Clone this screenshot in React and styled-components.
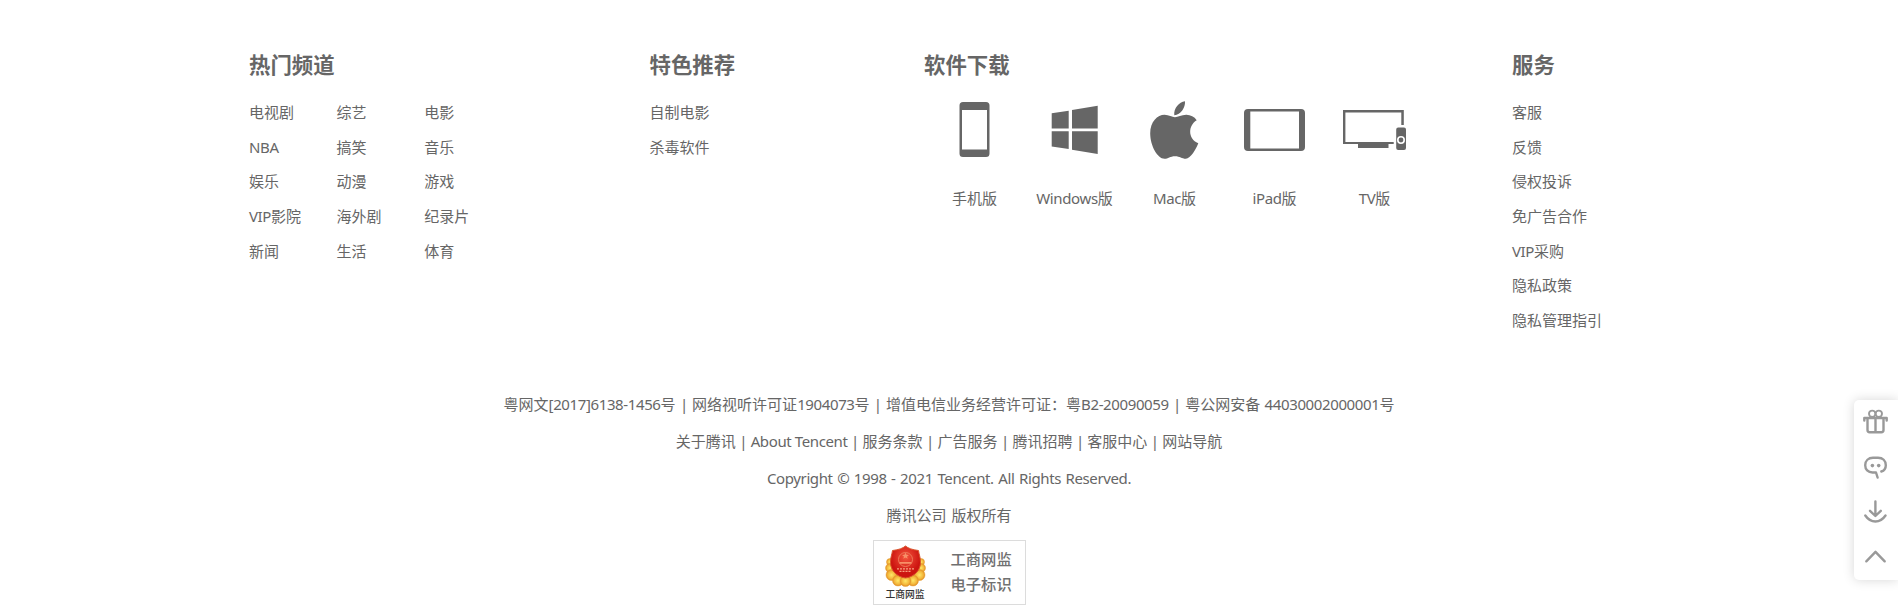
import React from "react";
import styled, { createGlobalStyle } from "styled-components";

const GlobalStyle = createGlobalStyle`
  body { margin: 0; background: #fff; }
  * { box-sizing: border-box; }
`;

const Page = styled.div`
  position: relative;
  height: 616px;
  overflow: hidden;
  color: #666;
  font: 15px/35px "Noto Sans", "Noto Sans CJK SC", sans-serif;
`;

const Columns = styled.nav`
  display: flex;
  height: 386px;
  padding: 47px 0 0 249px;
`;

const Column = styled.section`
  flex: none;
  width: ${(p) => p.$width}px;
`;

const Heading = styled.h3`
  margin: 0 0 13px;
  height: 35px;
  font-size: 21.4px;
  line-height: 35px;
  font-weight: 700;
`;

const LinkGrid = styled.ul`
  display: grid;
  grid-template-columns: repeat(${(p) => p.$cols || 1}, 87.6px);
  grid-auto-rows: 34.7px;
  margin: 0;
  padding: 0;
  list-style: none;
  white-space: nowrap;
`;

const Latin = styled.span`
  letter-spacing: -0.38px;
`;

const Downloads = styled.div`
  display: flex;
`;

const Download = styled.a`
  display: flex;
  flex-direction: column;
  align-items: center;
  width: 100px;
  margin-top: 3px;
  svg { display: block; }
`;

const DownloadName = styled.span`
  margin-top: 19px;
  padding-left: 1px;
  white-space: nowrap;
`;

const Legal = styled.footer`
  display: flex;
  flex-direction: column;
  align-items: center;
`;

const LegalLine = styled.p`
  margin: 0;
  height: 37px;
  line-height: 37px;
  white-space: pre;
  word-spacing: ${(p) => p.$space || 0}px;
`;

const Badge = styled.a`
  display: flex;
  align-items: center;
  width: 153px;
  height: 65px;
  margin-top: 6px;
  border: 1px solid #dcdcdc;
`;

const Seal = styled.span`
  display: flex;
  flex-direction: column;
  align-items: center;
  width: 63px;
  svg { display: block; }
`;

const SealName = styled.span`
  margin-top: 1px;
  color: #333;
  font: 500 9.8px/12px "Noto Sans CJK SC", sans-serif;
`;

const BadgeText = styled.span`
  margin: -3px 0 0 14px;
  color: #707070;
  font: 500 15.3px/25px "Noto Sans CJK SC", sans-serif;
`;

const SideBar = styled.aside`
  position: absolute;
  top: 400px;
  right: 0;
  width: 44px;
  height: 180px;
  border-radius: 5px 0 0 5px;
  background: #fff;
  box-shadow: 0 0 12px rgba(0, 0, 0, 0.16);
  display: flex;
  flex-direction: column;
  svg { display: block; }
`;

const SideButton = styled.a`
  height: 45px;
`;

function LatinText({ children }) {
  return children
    .split(/([\x20-\x7e©]+)/)
    .filter(Boolean)
    .map((part, i) =>
      /^[\x20-\x7e©]/.test(part) ? <Latin key={i}>{part}</Latin> : part
    );
}

function Links({ items, cols }) {
  return (
    <LinkGrid $cols={cols}>
      {items.map((item) => (
        <li key={item}><LatinText>{item}</LatinText></li>
      ))}
    </LinkGrid>
  );
}

const hot = ["电视剧", "综艺", "电影", "NBA", "搞笑", "音乐", "娱乐", "动漫", "游戏", "VIP影院", "海外剧", "纪录片", "新闻", "生活", "体育"];
const featured = ["自制电影", "杀毒软件"];
const service = ["客服", "反馈", "侵权投诉", "免广告合作", "VIP采购", "隐私政策", "隐私管理指引"];

const downloads = [
  {
    name: "手机版",
    art: <path fillRule="evenodd" d="M39 4h23a3.500 3.500 0 0 1 3.500 3.500v48a3.500 3.500 0 0 1-3.500 3.500H39a3.500 3.500 0 0 1-3.500-3.500v-48A3.500 3.500 0 0 1 39 4ZM38 12v39.500h25V12Z" />,
  },
  {
    name: "Windows版",
    art: <path d="M27.700 15.200 44.700 12.800V30.500H27.700ZM48 12.100 73.700 7.800V30.500H48ZM27.700 33.200H44.700V51L27.700 48.600ZM48 33.200H73.700V56L48 51.800Z" />,
  },
  {
    name: "Mac版",
    art: <path d="M72.700 22.200C64 27.500 63.600 40.500 74.300 45.300 71.800 51.500 66.800 60.500 61.800 60.700 57.800 60.700 56 58.200 51 58.200 46 58.200 44.200 60.700 40.500 60.800 33.500 60.600 26.300 48 26.200 35.500 26.200 23.500 33.500 17 40.500 16.800 45 16.800 48 19.200 51 19.200 54 19.200 57.500 16.600 62.500 16.700 66.500 16.800 70.300 18.500 72.700 22.200ZM50.300 17.300C49.500 10.500 55 3.800 61 3.200 61.500 9.500 56.800 16.800 50.300 17.300Z" />,
  },
  {
    name: "iPad版",
    art: <path fillRule="evenodd" d="M24 11h53a4 4 0 0 1 4 4v34a4 4 0 0 1-4 4H24a4 4 0 0 1-4-4V15a4 4 0 0 1 4-4ZM26.300 13.500v37h48.700v-37Z" />,
  },
  {
    name: "TV版",
    art: (
      <>
        <path d="M19 12H79.800V27H77.300V14.400H21.400V44H69.700V46H64.500V50H34V46H19Z" />
        <path fillRule="evenodd" d="M74.200 29.500h5.800a2 2 0 0 1 2 2V50a2 2 0 0 1-2 2h-5.800a2 2 0 0 1-2-2V31.500a2 2 0 0 1 2-2ZM77 38a4 4 0 1 0 0 8a4 4 0 1 0 0-8Zm0 1.600a2.400 2.400 0 1 1 0 4.800a2.400 2.400 0 1 1 0-4.800Z" />
      </>
    ),
  },
];

const sideIcons = [
  <g key="gift">
    <path d="M10.300 20.500V18h22.400v2.500M13.500 19v11q0 2.200 2.200 2.200h11.600q2.200 0 2.200-2.200V19M21.500 18V31" />
    <circle cx="18.200" cy="13.800" r="3.200" strokeWidth="1.900" />
    <circle cx="24.800" cy="13.800" r="3.200" strokeWidth="1.900" />
  </g>,
  <g key="chat">
    <path d="M23.600 32.500L22 27.500H18.500C14 27.500 11.200 24.300 11.200 20.300 11.200 15.600 14.500 12.800 19 12.800H24C28.800 12.800 31.800 15.700 31.800 20.200 31.800 23.300 30.300 25.600 27.300 26.500" />
    <circle cx="18.400" cy="20.600" r="1.800" fill="#999" stroke="none" />
    <circle cx="24.700" cy="20.600" r="1.800" fill="#999" stroke="none" />
  </g>,
  <path key="download" d="M21.400 11.500v14M16 20.800l5.400 5.200L26.800 20.800M11.300 25.500c5.400 8 14.800 8 20.200 0" />,
  <path key="top" d="M12.300 26.300l9.200-9.500 9.200 9.500" />,
];

function Emblem() {
  return (
    <svg width="41" height="42" viewBox="0 0 41 42">
      <defs>
        <radialGradient id="gold"><stop offset="0" stopColor="#ffe868" /><stop offset=".7" stopColor="#f3b53a" /><stop offset="1" stopColor="#dd8a22" /></radialGradient>
        <radialGradient id="red" cy=".35"><stop offset="0" stopColor="#f4543c" /><stop offset="1" stopColor="#cc1410" /></radialGradient>
      </defs>
      <g fill="url(#gold)" stroke="#eba537" strokeWidth=".5">
        <circle cx="5" cy="17" r="3.500" /><circle cx="36" cy="17" r="3.500" />
        <circle cx="5" cy="23" r="4.500" /><circle cx="36" cy="23" r="4.500" />
        <circle cx="6.500" cy="30" r="5.500" /><circle cx="34.500" cy="30" r="5.500" />
        <circle cx="13" cy="35.500" r="5.500" /><circle cx="28" cy="35.500" r="5.500" />
        <circle cx="20.500" cy="36" r="5.500" />
      </g>
      <path d="M20.500 1q4 3.500 13 4.500c.5 4 2 6.500 2 12 0 8-6.500 14.500-15 15.500-8.500-1-15-7.500-15-15.500 0-5.500 1.500-8 2-12Q16.500 4.500 20.500 1Z" fill="url(#red)" stroke="#d9552c" />
      <circle cx="20.500" cy="14.500" r="7" fill="none" stroke="#ee7a58" strokeWidth="1" />
      <path d="M20.500 7.500l1 2.300 2.500.1-2 1.500.7 2.400-2.200-1.400-2.200 1.400.7-2.400-2-1.500 2.500-.1ZM14.500 17h12v1.800h-12Z" fill="#f79068" />
      <path d="M12 23.800h17M14.500 26.300h12" stroke="#f7a080" strokeWidth="1.200" strokeDasharray="2 1" />
    </svg>
  );
}

export default function App() {
  return (
    <Page>
      <GlobalStyle />
      <Columns>
        <Column $width={400.5}><Heading>热门频道</Heading><Links items={hot} cols={3} /></Column>
        <Column $width={274.5}><Heading>特色推荐</Heading><Links items={featured} /></Column>
        <Column $width={588}>
          <Heading>软件下载</Heading>
          <Downloads>
            {downloads.map((d) => (
              <Download key={d.name}>
                <svg width="100" height="64" fill="#666">{d.art}</svg>
                <DownloadName><LatinText>{d.name}</LatinText></DownloadName>
              </Download>
            ))}
          </Downloads>
        </Column>
        <Column $width={200}><Heading>服务</Heading><Links items={service} /></Column>
      </Columns>
      <Legal>
        <LegalLine $space={0.8}><LatinText>粤网文[2017]6138-1456号 | 网络视听许可证1904073号 | 增值电信业务经营许可证：粤B2-20090059 | 粤公网安备 44030002000001号</LatinText></LegalLine>
        <LegalLine><LatinText>关于腾讯 | About Tencent | 服务条款 | 广告服务 | 腾讯招聘 | 客服中心 | 网站导航</LatinText></LegalLine>
        <LegalLine $space={1}><LatinText>Copyright © 1998 - 2021 Tencent. All Rights Reserved.</LatinText></LegalLine>
        <LegalLine $space={1}>腾讯公司 版权所有</LegalLine>
        <Badge>
          <Seal><Emblem /><SealName>工商网监</SealName></Seal>
          <BadgeText>工商网监<br />电子标识</BadgeText>
        </Badge>
      </Legal>
      <SideBar>
        {sideIcons.map((icon) => (
          <SideButton key={icon.key}>
            <svg width="44" height="45" fill="none" stroke="#999" strokeWidth="2.400" strokeLinecap="round" strokeLinejoin="round">{icon}</svg>
          </SideButton>
        ))}
      </SideBar>
    </Page>
  );
}
